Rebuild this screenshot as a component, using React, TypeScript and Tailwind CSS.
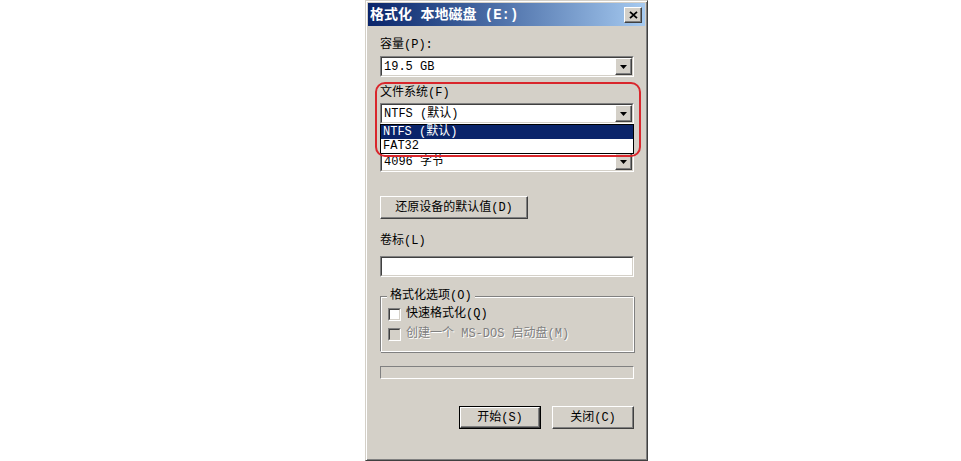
import React from "react";

const F = { fontFamily: '"Liberation Mono", "Noto Sans CJK SC", monospace' } as React.CSSProperties;

function DropBtn() {
  return (
    <div className="w-[17px] h-[17px] bg-[#d4d0c8] border border-t-white border-l-white border-b-[#404040] border-r-[#404040] shadow-[inset_-1px_-1px_0_#808080,inset_1px_1px_0_#d4d0c8] flex items-center justify-center">
      <svg width="7" height="4" viewBox="0 0 7 4"><path d="M0 0h7L3.5 4z" fill="#000" /></svg>
    </div>
  );
}

function Combo({ text }: { text: string }) {
  return (
    <div className="h-[21px] border border-t-[#808080] border-l-[#808080] border-b-white border-r-white">
      <div className="h-full bg-white border border-t-[#404040] border-l-[#404040] border-b-[#d4d0c8] border-r-[#d4d0c8] flex items-center justify-between pl-[2px]">
        <span className="text-[12px] leading-[14px] text-black" style={F}>{text}</span>
        <DropBtn />
      </div>
    </div>
  );
}

function Button({ children, w, def }: { children: React.ReactNode; w: string; def?: boolean }) {
  return (
    <div className={`${w} h-[23px] ${def ? "border border-black" : ""}`}>
      <div className="h-full bg-[#d4d0c8] border border-t-white border-l-white border-b-[#404040] border-r-[#404040] shadow-[inset_-1px_-1px_0_#808080] flex items-center justify-center text-[12px] text-black" style={F}>
        {children}
      </div>
    </div>
  );
}

function Check({ disabled, label }: { disabled?: boolean; label: string }) {
  return (
    <div className="flex items-center h-[14px] gap-[5px]">
      <div className="w-[13px] h-[13px] border border-t-[#808080] border-l-[#808080] border-b-white border-r-white">
        <div className={`w-full h-full border border-t-[#404040] border-l-[#404040] border-b-[#d4d0c8] border-r-[#d4d0c8] ${disabled ? "bg-[#d4d0c8]" : "bg-white"}`} />
      </div>
      <span
        className={`text-[12px] leading-[14px] ${disabled ? "text-[#808080] [text-shadow:1px_1px_0_#fff]" : "text-black"}`}
        style={F}
      >
        {label}
      </span>
    </div>
  );
}

export default function App() {
  return (
    <div className="w-[961px] h-[461px] bg-white overflow-hidden">
      <div className="ml-[365px] w-[283px] h-[461px] bg-[#d4d0c8] border border-t-[#d4d0c8] border-l-[#d4d0c8] border-r-[#404040] border-b-[#404040] shadow-[inset_1px_1px_0_#fff,inset_-1px_-1px_0_#808080] p-[2px] flex flex-col relative">
        {/* title bar */}
        <div className="h-[23px] bg-gradient-to-r from-[#0a246a] to-[#a6caf0] flex items-center justify-between pl-[2px] pr-[3px]">
          <span className="text-white font-bold text-[14px] leading-[16px]" style={F}>格式化 本地磁盘 (E:)</span>
          <div className="w-[18px] h-[16px] bg-[#d4d0c8] border border-t-white border-l-white border-b-[#404040] border-r-[#404040] shadow-[inset_-1px_-1px_0_#808080] flex items-center justify-center">
            <svg width="9" height="8" viewBox="0 0 9 8"><path d="M1 0.8L8 7.2M8 0.8L1 7.2" stroke="#000" strokeWidth="1.8" /></svg>
          </div>
        </div>

        <div className="flex flex-col pl-[12px] pr-[11px]">
          <div className="mt-[12px] h-[14px] text-[12px] leading-[14px] text-black" style={F}>容量(P):</div>
          <div className="mt-[4px]"><Combo text="19.5 GB" /></div>
          <div className="mt-[9px] h-[14px] text-[12px] leading-[14px] text-black" style={F}>文件系统(F)</div>
          <div className="mt-[3px] relative">
            <Combo text="NTFS (默认)" />
            <div className="absolute left-0 right-0 top-[21px] h-[30px] bg-white border border-black z-10 flex flex-col">
              <div className="h-[14px] bg-[#0a246a] text-white text-[12px] leading-[14px] pl-[2px]" style={F}>NTFS (默认)</div>
              <div className="h-[14px] text-black text-[12px] leading-[14px] pl-[2px]" style={F}>FAT32</div>
            </div>
          </div>
          <div className="mt-[27px]"><Combo text="4096 字节" /></div>
          <div className="mt-[24px]"><Button w="w-[148px]">还原设备的默认值(D)</Button></div>
          <div className="mt-[15px] h-[14px] text-[12px] leading-[14px] text-black" style={F}>卷标(L)</div>
          <div className="mt-[8px] h-[21px] border border-t-[#808080] border-l-[#808080] border-b-white border-r-white">
            <div className="h-full bg-white border border-t-[#404040] border-l-[#404040] border-b-[#d4d0c8] border-r-[#d4d0c8]" />
          </div>
          <div className="mt-[19px] relative h-[56px] border border-t-[#808080] border-l-[#808080] border-b-white border-r-white shadow-[inset_1px_1px_0_#fff,1px_1px_0_#808080] pl-[7px] pt-[10px] flex flex-col gap-[6px]">
            <span className="absolute left-[6px] top-[-8px] px-[3px] bg-[#d4d0c8] text-[12px] leading-[14px] text-black" style={F}>格式化选项(O)</span>
            <Check label="快速格式化(Q)" />
            <Check disabled label="创建一个 MS-DOS 启动盘(M)" />
          </div>
          <div className="mt-[14px] h-[13px] border border-t-[#808080] border-l-[#808080] border-b-white border-r-white" />
          <div className="mt-[27px] flex justify-end gap-[11px]">
            <Button w="w-[82px]" def>开始(S)</Button>
            <Button w="w-[82px]">关闭(C)</Button>
          </div>
        </div>

        {/* red annotation ring */}
        <div className="absolute left-[9px] top-[81px] w-[266px] h-[75px] border-2 border-[#d9262c] rounded-[10px] z-20 pointer-events-none" />
      </div>
    </div>
  );
}
